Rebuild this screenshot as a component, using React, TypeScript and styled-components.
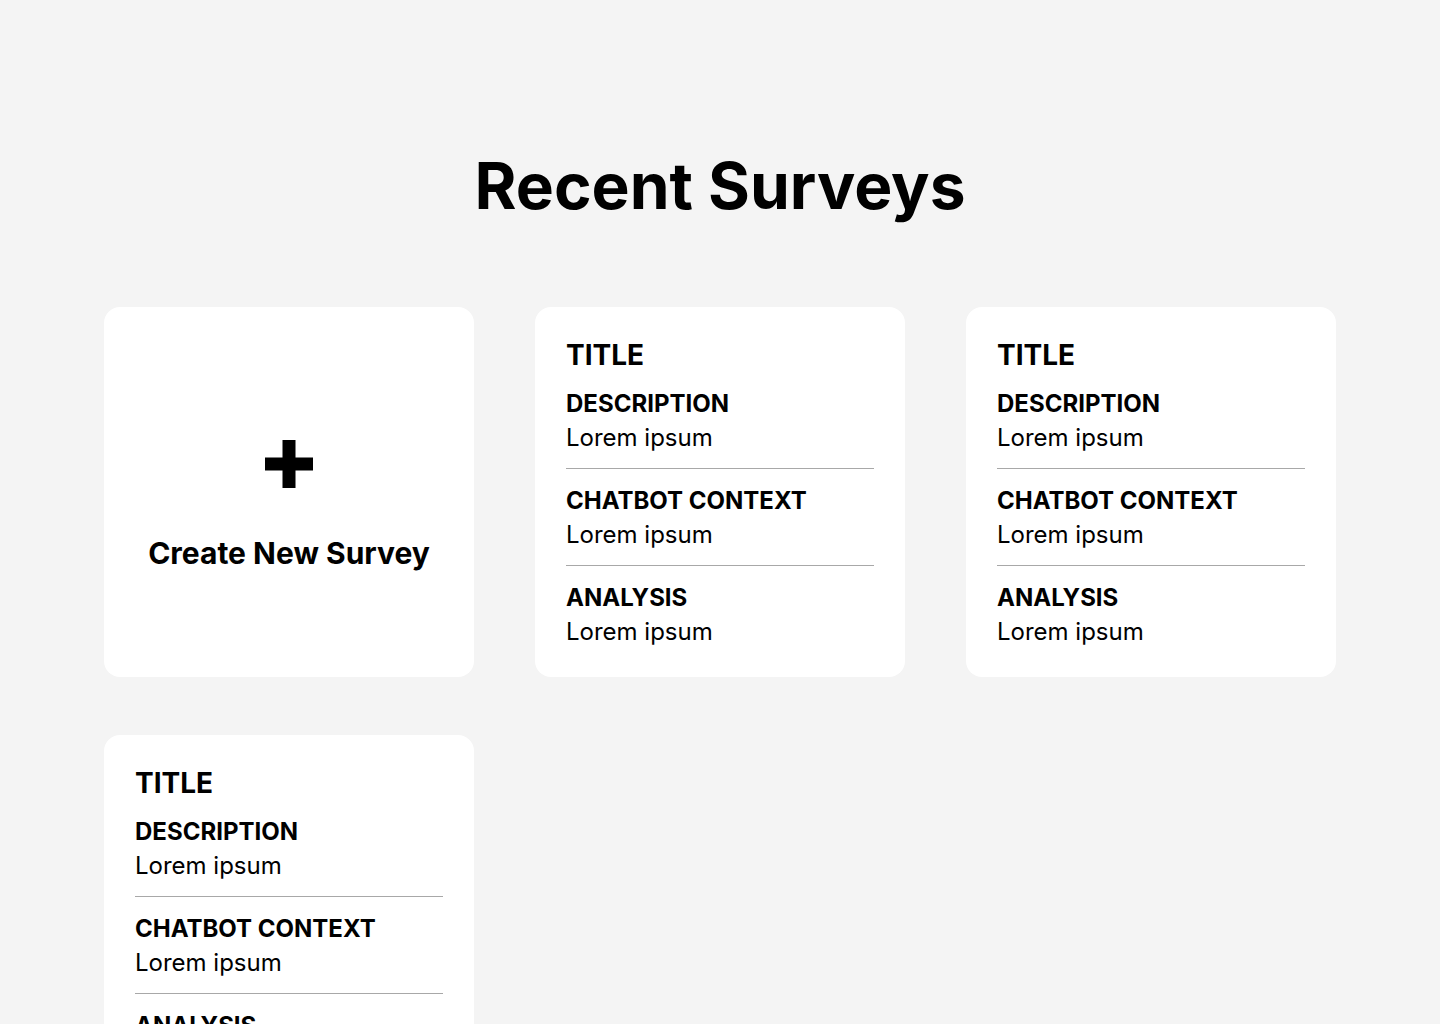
import styled, { createGlobalStyle } from 'styled-components';

const GlobalStyle = createGlobalStyle`
  html, body {
    margin: 0;
    padding: 0;
    background: #f4f4f4;
  }
  body {
    font-family: Inter, "Noto Sans", sans-serif;
    color: #000;
  }
`;

type Survey = {
    id: number
    title: string
    description: string
    context: string
    analysis: string
}

const surveys: Survey[] = [
    { id: 1, title: 'TITLE', description: 'Lorem ipsum', context: 'Lorem ipsum', analysis: 'Lorem ipsum' },
    { id: 2, title: 'TITLE', description: 'Lorem ipsum', context: 'Lorem ipsum', analysis: 'Lorem ipsum' },
    { id: 3, title: 'TITLE', description: 'Lorem ipsum', context: 'Lorem ipsum', analysis: 'Lorem ipsum' },
];

const Page = styled.main`
  min-height: 1024px;
  padding: 147px 104px 60px;
  box-sizing: border-box;
`;

const Heading = styled.h1`
  margin: 0 0 83px;
  text-align: center;
  font-size: 64px;
  font-weight: 700;
  line-height: 77px;
`;

const Grid = styled.section`
  display: grid;
  grid-template-columns: repeat(3, 370px);
  column-gap: 61px;
  row-gap: 58px;
`;

const Card = styled.div`
  box-sizing: border-box;
  height: 370px;
  background: #fff;
  border-radius: 16px;
  padding: 31px 31px 30px;
  display: flex;
  flex-direction: column;
`;

const CreateCard = styled(Card)`
  align-items: center;
  justify-content: center;
  gap: 47px;
  padding-top: 57px;
  cursor: pointer;
`;

const CreateLabel = styled.span`
  font-size: 30px;
  font-weight: 700;
  line-height: 36px;
`;

const CardTitle = styled.h2`
  margin: 0;
  font-size: 28px;
  font-weight: 700;
  line-height: 34px;
`;

const Field = styled.div<{ $last?: boolean }>`
  padding: 17px 0 16px;
  border-bottom: ${({ $last }) => ($last ? 'none' : '1px solid #a8a8a8')};
`;

const FieldLabel = styled.h3`
  margin: 0 0 5px;
  font-size: 24px;
  font-weight: 700;
  line-height: 29px;
`;

const FieldValue = styled.p`
  margin: 0;
  font-size: 24px;
  font-weight: 400;
  line-height: 29px;
`;

const PlusIcon = () => (
    <svg width="48" height="48" viewBox="0 0 48 48" aria-hidden="true">
        <rect x="17.5" y="0" width="13" height="48" fill="#000" />
        <rect x="0" y="17.5" width="48" height="13" fill="#000" />
    </svg>
);

const SurveyCard: React.FC<{ survey: Survey }> = ({ survey }) => (
    <Card>
        <CardTitle>{survey.title}</CardTitle>
        <Field>
            <FieldLabel>DESCRIPTION</FieldLabel>
            <FieldValue>{survey.description}</FieldValue>
        </Field>
        <Field>
            <FieldLabel>CHATBOT CONTEXT</FieldLabel>
            <FieldValue>{survey.context}</FieldValue>
        </Field>
        <Field $last>
            <FieldLabel>ANALYSIS</FieldLabel>
            <FieldValue>{survey.analysis}</FieldValue>
        </Field>
    </Card>
);

export default function App() {
    return (
        <>
            <GlobalStyle />
            <Page>
                <Heading>Recent Surveys</Heading>
                <Grid>
                    {/* New survey tile */}
                    <CreateCard>
                        <PlusIcon />
                        <CreateLabel>Create New Survey</CreateLabel>
                    </CreateCard>
                    {surveys.map((s) => (
                        <SurveyCard key={s.id} survey={s} />
                    ))}
                </Grid>
            </Page>
        </>
    );
}
